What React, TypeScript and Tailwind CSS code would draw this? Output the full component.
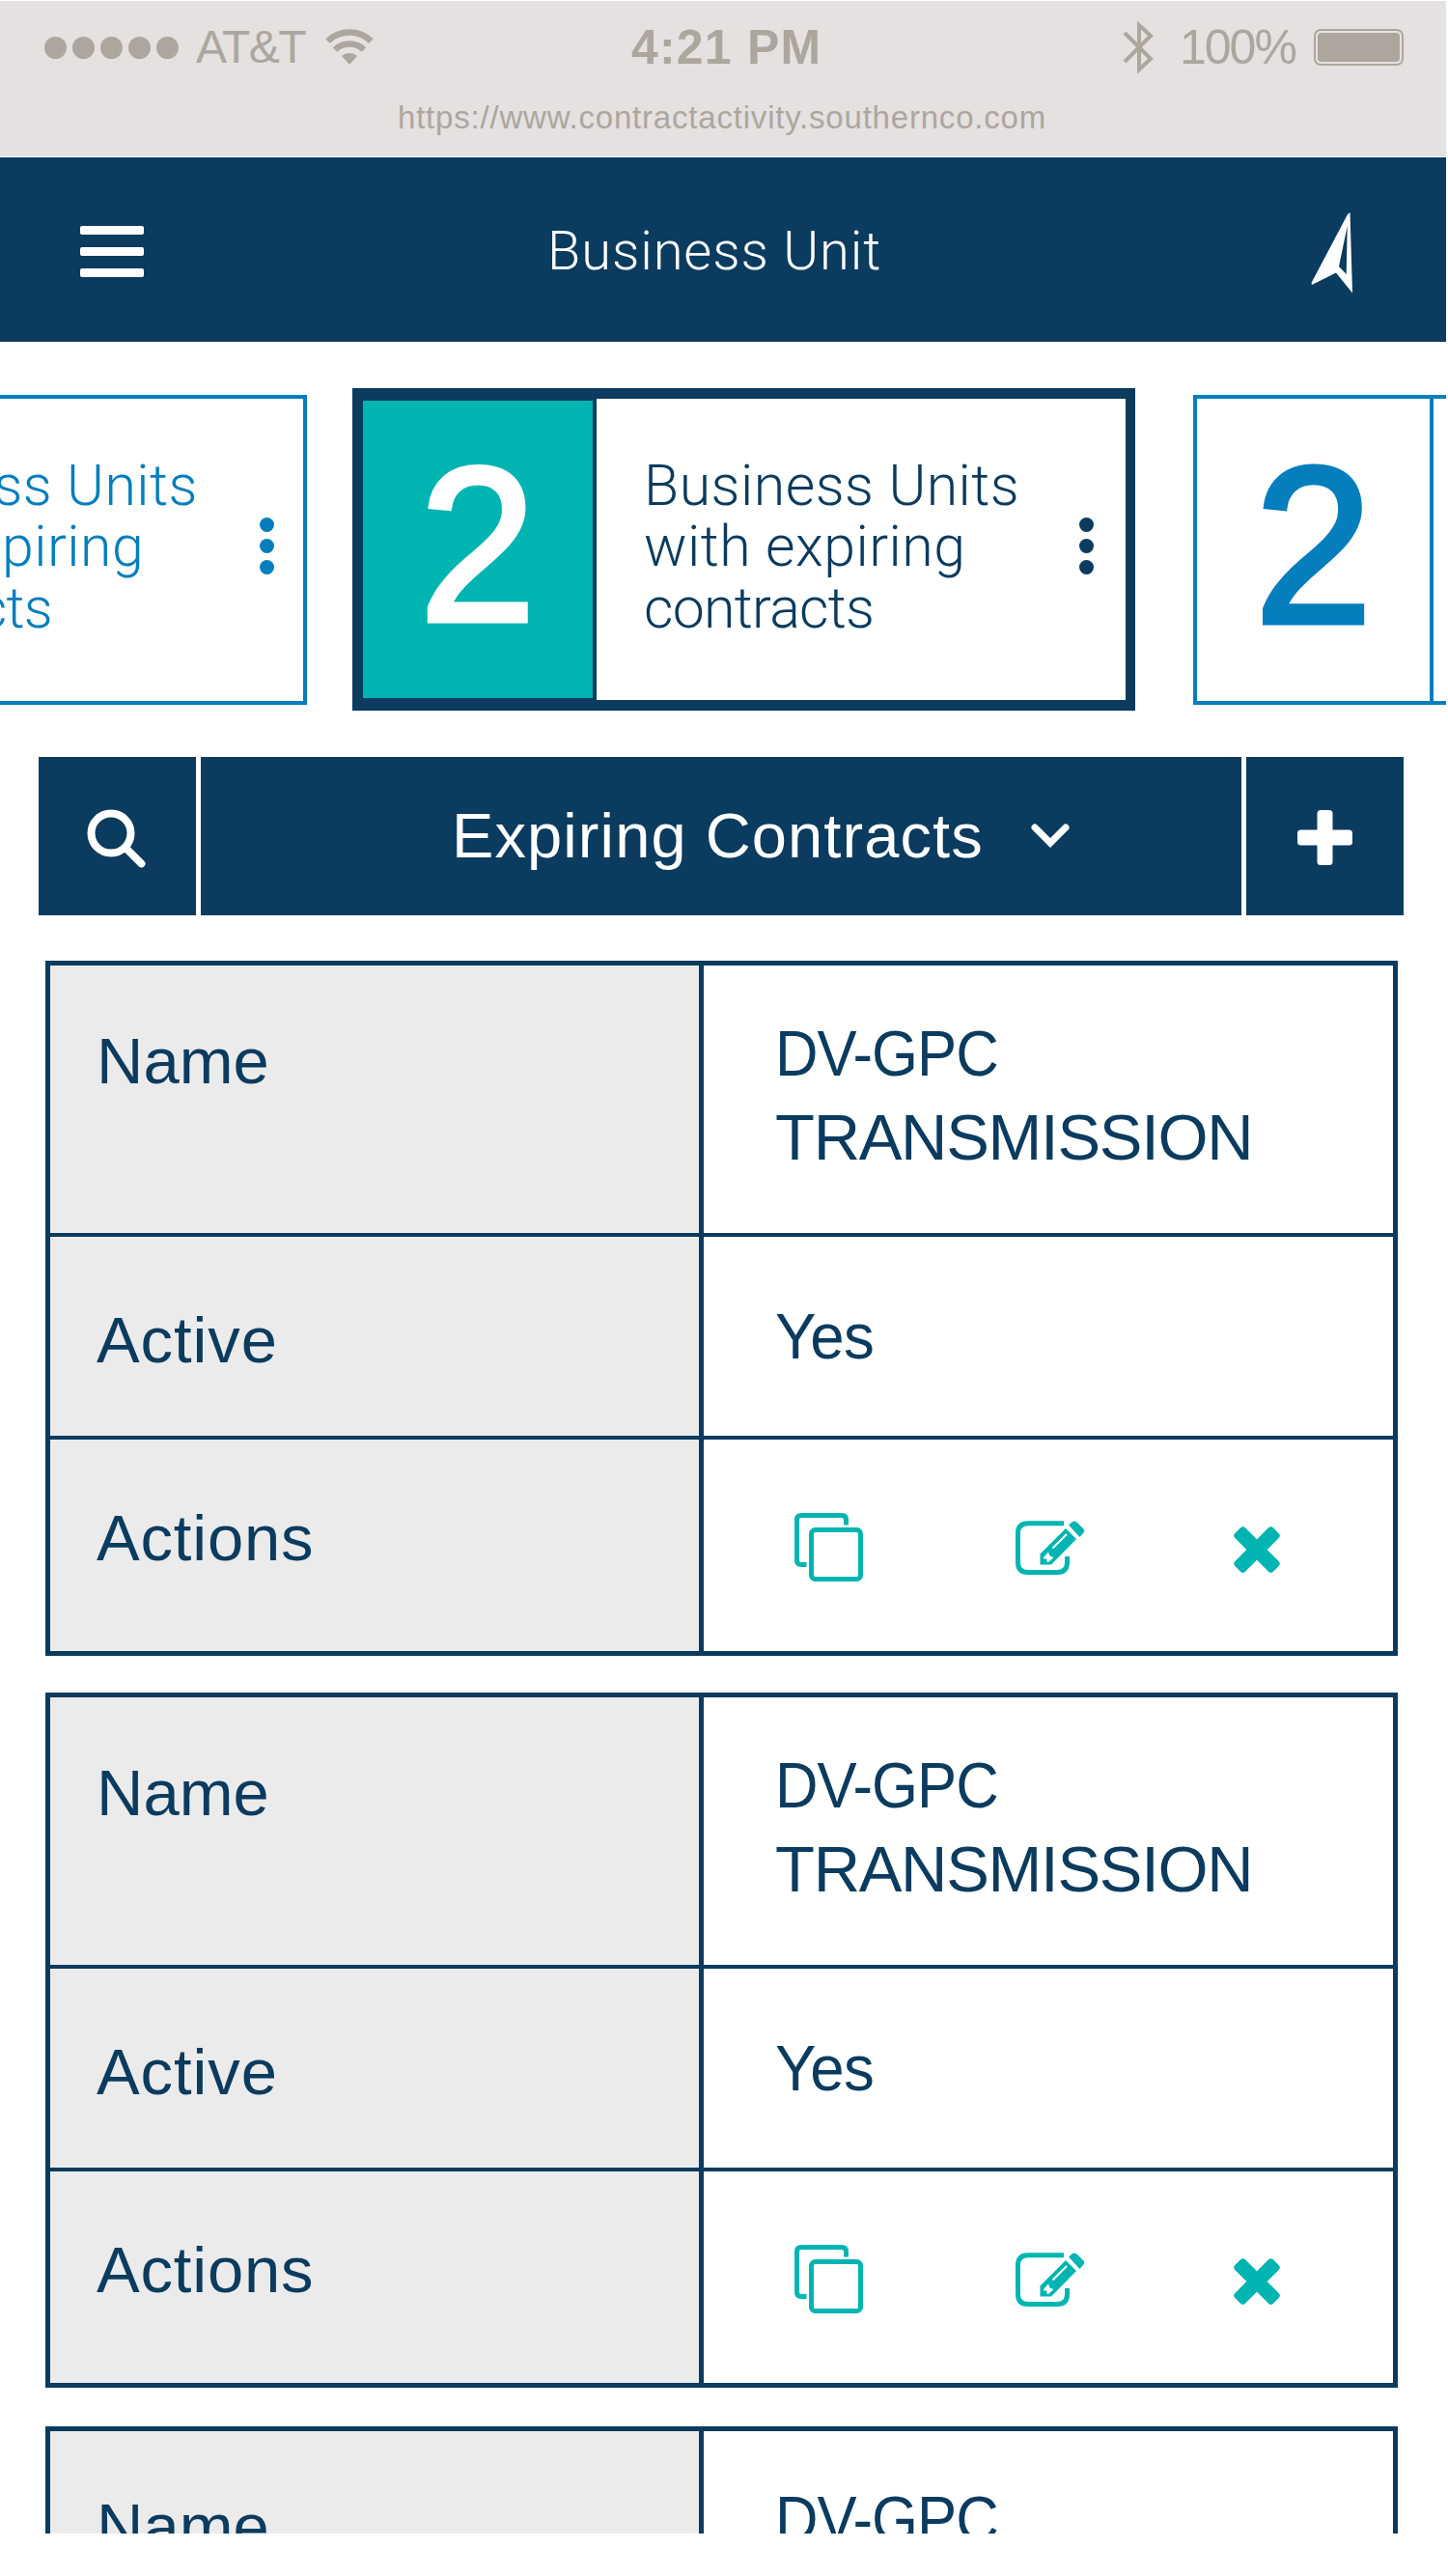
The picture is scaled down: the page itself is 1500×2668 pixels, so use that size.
const records = [
  { id: 1, name: ["DV-GPC", "TRANSMISSION"], active: "Yes" },
  { id: 2, name: ["DV-GPC", "TRANSMISSION"], active: "Yes" },
  { id: 3, name: ["DV-GPC", "TRANSMISSION"], active: "Yes" },
]

function StatusBar() {
  return (
    <div className="mt-px h-[161px] bg-[#e4e1e0] text-[#ada69f]">
      <div className="flex h-[96px] items-center pl-[46px] pr-[44px]">
        <div className="flex w-[608px] items-center">
          <div className="flex gap-[6px]">
            {[0, 1, 2, 3, 4].map((i) => (
              <div key={i} className="h-[23px] w-[23px] rounded-full bg-[#ada69f]" />
            ))}
          </div>
          <span className="ml-[18px] w-[115px] whitespace-nowrap text-[48px] tracking-[-1.5px]">AT&amp;T</span>
          <svg className="ml-[19px]" width="50" height="38" viewBox="0 0 50 38" fill="none" stroke="#ada69f" strokeWidth="6.5">
            <path d="M2.5 12.5C15 0.5 35 0.5 47.5 12.5" />
            <path d="M10 21.5C18 13.5 32 13.5 40 21.5" />
            <path d="M25 37L17 28C21.5 24 28.5 24 33 28Z" fill="#ada69f" stroke="none" />
          </svg>
        </div>
        <span className="whitespace-nowrap text-[50px] font-bold tracking-[1.2px]">4:21 PM</span>
        <div className="ml-auto flex items-center">
          <svg width="32" height="56" viewBox="0 0 32 56" fill="none" stroke="#ada69f" strokeWidth="4">
            <path d="M2 13L29 40L17 51V5L29 16L2 43" />
          </svg>
          <span className="ml-[27px] w-[123px] whitespace-nowrap text-[50px] tracking-[-2px]">100%</span>
          <div className="ml-[16px] h-[38px] w-[93px] rounded-[7px] border-2 border-[#ada69f] p-[2px]">
            <div className="h-full rounded-[4px] bg-[#ada69f]" />
          </div>
        </div>
      </div>
      <p className="pl-[412px] text-[33px] leading-[50px] tracking-[0.8px]">https://www.contractactivity.southernco.com</p>
    </div>
  )
}

function NavBar() {
  return (
    <div className="mt-px flex h-[191px] items-center bg-[#0b3b5e] text-white">
      <div className="ml-[83px] mt-[3px] flex flex-col gap-[13px]">
        <div className="h-[9px] w-[66px] rounded-[2px] bg-white" />
        <div className="h-[9px] w-[66px] rounded-[2px] bg-white" />
        <div className="h-[9px] w-[66px] rounded-[2px] bg-white" />
      </div>
      <h1 className="ml-[418px] mt-[2px] w-[780px] whitespace-nowrap font-[Roboto] text-[56px] font-light tracking-[0.9px]">Business Unit</h1>
      <svg className="ml-[11px] mt-[6px]" width="44" height="84" viewBox="0 0 44 84" fill="#fff" fillRule="evenodd">
        <path d="M40.5 0L43 83.5L26 62.5L1 75L0.5 73L38 2ZM37.7 14L29 56L36.7 64Z" />
      </svg>
    </div>
  )
}

function Dots({ className }: { className?: string }) {
  return (
    <div className={`mb-[8px] flex flex-col gap-[7px] ${className ?? ''}`}>
      {[0, 1, 2].map((i) => (
        <div key={i} className="h-[15px] w-[15px] rounded-full bg-current" />
      ))}
    </div>
  )
}

function CardText() {
  return (
    <p className="mb-[6px] whitespace-nowrap font-[Roboto] text-[59px] font-light leading-[63.5px] tracking-[0.5px]">
      Business Units<br />with expiring<br />
      <span className="tracking-[-0.7px]">contracts</span>
    </p>
  )
}

function Carousel() {
  return (
    <div className="mt-[48px] flex h-[334px] items-center overflow-hidden">
      <div className="flex h-[321px] w-[318px] items-center justify-end border-y-4 border-r-4 border-[#047ebd] text-[#047ebd]">
        <div className="mr-[64px]">
          <CardText />
        </div>
        <Dots className="mr-[30px]" />
      </div>
      <div className="ml-[47px] flex h-[334px] w-[811px] shrink-0 items-center border-x-[10px] border-y-[11px] border-[#0b3b5e] text-[#0b3b5e]">
        <div className="flex h-[312px] w-[243px] items-center justify-center border-y-2 border-r-4 border-l border-[#0b3b5e] bg-[#00b5b1]">
          <span className="mb-[10px] scale-x-95 text-[229px] leading-none text-white [-webkit-text-stroke:5px]">2</span>
        </div>
        <div className="ml-[49px] w-[451px]">
          <CardText />
        </div>
        <Dots />
      </div>
      <div className="ml-[60px] flex h-[321px] w-[262px] shrink-0 border-y-4 border-l-4 border-[#047ebd] text-[#047ebd]">
        <div className="flex w-[245px] items-center justify-center border-r-4 border-[#047ebd]">
          <span className="mb-[8px] scale-x-95 text-[232px] leading-none [-webkit-text-stroke:5px]">2</span>
        </div>
      </div>
    </div>
  )
}

function Toolbar() {
  return (
    <div className="ml-[40px] mt-[48px] flex h-[164px] w-[1414px] gap-[5px] text-white">
      <button className="flex w-[163px] items-center justify-center bg-[#0b3b5e] pr-[2px] pt-[5px]">
        <svg width="62" height="62" viewBox="0 0 62 62" fill="none" stroke="#fff" strokeWidth="8" strokeLinecap="round">
          <circle cx="25" cy="25" r="20.5" />
          <path d="M40 40L56.5 56.5" />
        </svg>
      </button>
      <button className="flex flex-1 items-center bg-[#0b3b5e]">
        <span className="ml-[260px] w-[600px] text-left text-[65px] tracking-[1.1px]">Expiring Contracts</span>
        <svg width="40" height="26" viewBox="0 0 40 26" fill="none" stroke="#fff" strokeWidth="7" strokeLinecap="round">
          <path d="M4 4L20 20L36 4" />
        </svg>
      </button>
      <button className="flex w-[163px] items-center justify-center bg-[#0b3b5e] pt-[3px]">
        <svg width="57" height="57" viewBox="0 0 57 57" fill="#fff">
          <rect x="20.5" width="16" height="57" rx="3.5" />
          <rect y="20.5" width="57" height="16" rx="3.5" />
        </svg>
      </button>
    </div>
  )
}

function CopyIcon() {
  return (
    <svg width="72" height="72" viewBox="0 0 72 72" fill="none" stroke="#00b5b1" strokeWidth="5">
      <path d="M12.5 53.5H7Q2.5 53.5 2.5 49V7Q2.5 2.5 7 2.5H49Q53.5 2.5 53.5 7V12.5" />
      <rect x="17.5" y="17.5" width="51" height="51" rx="4" />
    </svg>
  )
}

function EditIcon() {
  return (
    <svg width="72" height="58" viewBox="0 0 72 58" fill="none">
      <path d="M50 2.8H13Q2.5 2.8 2.5 13V43Q2.5 53.5 13 53.5H43Q53.5 53.5 53.5 43V37" stroke="#00b5b1" strokeWidth="5" />
      <path d="M52 8L63 19L37 45.5H25.5V34.5Z" fill="#00b5b1" />
      <path d="M55 4.5L59 1Q61.5 -0.5 64 2L70 8Q72.5 10.5 70 13L66.5 17Z" fill="#00b5b1" />
      <path d="M38.5 28.5L53 14" stroke="#fff" strokeWidth="2" />
      <path d="M29 38L34 32.5L35.5 36.5L39.5 38L34 43L32.5 42.5V39.5H29Z" fill="#fff" />
    </svg>
  )
}

function DeleteIcon() {
  return (
    <svg width="48" height="48" viewBox="0 0 48 48" fill="#00b5b1">
      <rect x="-4" y="16.5" width="56" height="15" rx="3.5" transform="rotate(45 24 24)" />
      <rect x="-4" y="16.5" width="56" height="15" rx="3.5" transform="rotate(-45 24 24)" />
    </svg>
  )
}

function RecordTable({ record }: { record: (typeof records)[0] }) {
  return (
    <div className="grid h-[720px] w-[1401px] shrink-0 grid-cols-[677px_714px] grid-rows-[281px_210px_219px] border-5 border-[#0b3b5e] text-[67px] leading-[87px] text-[#0b3b5e] last:mt-[2px]">
      <div className="border-r-5 border-b-4 border-[#0b3b5e] bg-[#ebebeb] pl-[48px] pt-[55px]">Name</div>
      <div className="border-b-4 border-[#0b3b5e] pl-[74px] pt-[47px]">
        <p className="origin-left scale-x-[0.92] tracking-[-1px]">{record.name[0]}</p>
        <p className="tracking-[-1.3px]">{record.name[1]}</p>
      </div>
      <div className="border-r-5 border-b-4 border-[#0b3b5e] bg-[#ebebeb] pl-[48px] pt-[63px] tracking-[0.9px]">Active</div>
      <div className="border-b-4 border-[#0b3b5e] pl-[74px] pt-[59px]">
        <p className="origin-left scale-x-[0.95] tracking-[-0.5px]">{record.active}</p>
      </div>
      <div className="border-r-5 border-[#0b3b5e] bg-[#ebebeb] pl-[48px] pt-[58px] tracking-[0.8px]">Actions</div>
      <div className="flex items-center pl-[94px] pt-[4px]">
        <CopyIcon />
        <div className="ml-[157px] pt-[2px]">
          <EditIcon />
        </div>
        <div className="ml-[154px] pt-[5px]">
          <DeleteIcon />
        </div>
      </div>
    </div>
  )
}

export default function App() {
  return (
    <div className="h-[2668px] bg-white font-['Liberation_Sans',Arial,sans-serif]">
      <div className="h-[2624px] w-[1498px] overflow-hidden">
        <StatusBar />
        <NavBar />
        <Carousel />
        <Toolbar />
        <div className="ml-[47px] mt-[47px] flex flex-col gap-[38px]">
          {records.map((record) => (
            <RecordTable key={record.id} record={record} />
          ))}
        </div>
      </div>
    </div>
  )
}
